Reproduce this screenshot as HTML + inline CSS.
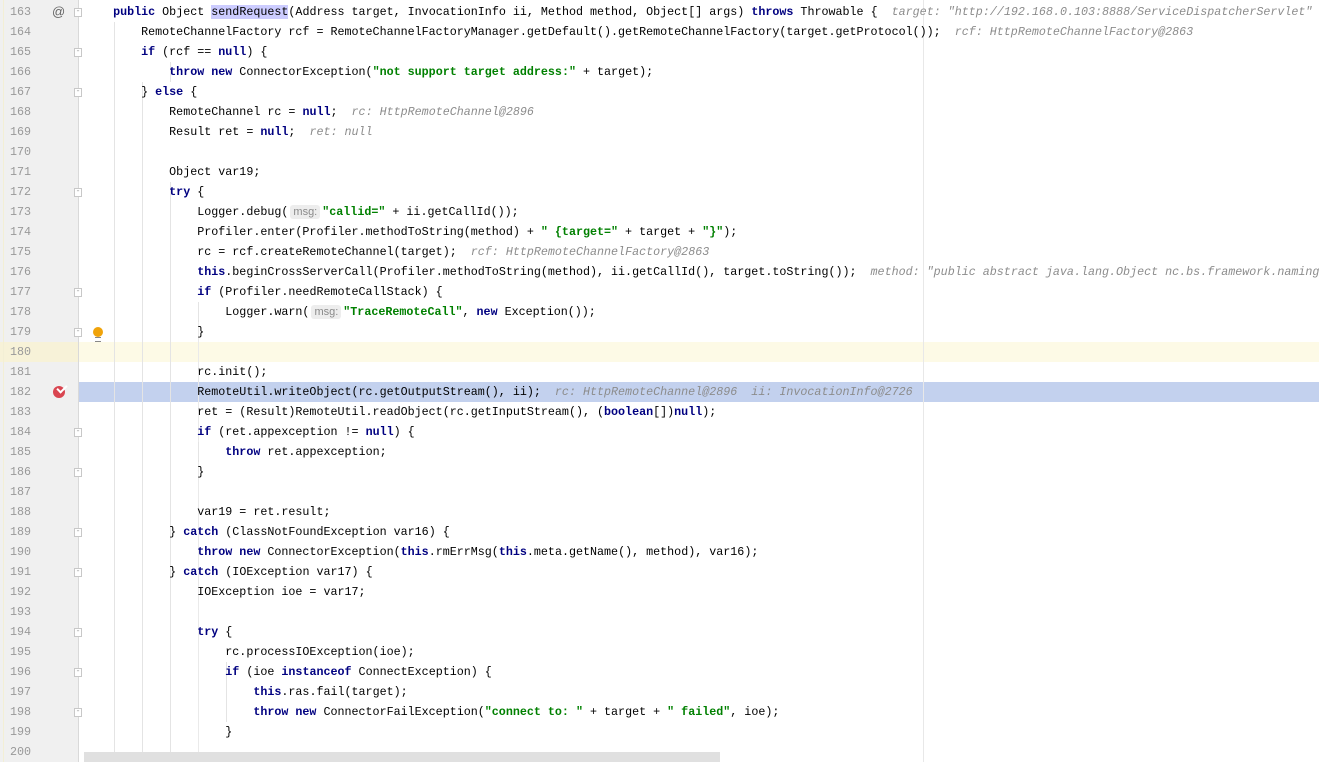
<!DOCTYPE html>
<html><head><meta charset="utf-8"><style>
body{margin:0;width:1319px;height:762px;overflow:hidden;background:#fff;position:relative;font-family:"Liberation Mono",monospace;}
.g{position:absolute;left:0;top:0;width:78px;height:762px;background:#f0f0f0;border-right:1px solid #d9d9d9;}
.ystrip{position:absolute;left:3px;top:0;width:1px;height:762px;background:#f3efd5}
.r{position:absolute;left:0;width:1319px;height:20px;}
.n{position:absolute;left:0;width:31px;text-align:right;font-size:11.7px;line-height:20px;color:#999;}
.c{position:absolute;left:85px;white-space:pre;font-size:11.7px;line-height:20px;color:#000;}
.k{color:#000080;font-weight:bold}
.s{color:#008000;font-weight:bold}
.h{color:#8c8c8c;font-style:italic}
.p{font-family:"Liberation Sans",sans-serif;font-size:11px;color:#8a8a8a;background:#ededed;border-radius:3px;padding:1px 3px;margin:0 2px;}
.hl{background:#ccccff}
.ig{position:absolute;width:1px;background:#e4e4e4}
.fold{position:absolute;left:74px;width:8px;height:9px;border:1px solid #c8c8c8;background:#fff;box-sizing:border-box;font-size:8px;line-height:6px;text-align:center;color:#999}
</style></head><body>
<div class="r" style="top:342px;background:#fdfae6"></div>
<div class="r" style="top:382px;left:78px;background:#c3d1ee"></div>
<div class="g"></div>
<div class="r" style="top:342px;width:78px;background:#f7f2d8"></div>
<div class="ystrip"></div>
<div class="ig" style="left:114px;top:22px;height:740px"></div>
<div class="ig" style="left:142px;top:82px;height:680px"></div>
<div class="ig" style="left:170px;top:182px;height:580px"></div>
<div class="ig" style="left:198px;top:322px;height:440px;background:#eaeaea"></div>
<div class="ig" style="left:170px;top:62px;height:20px"></div>
<div class="ig" style="left:198px;top:302px;height:20px"></div>
<div class="ig" style="left:198px;top:442px;height:20px"></div>
<div class="ig" style="left:226px;top:662px;height:60px"></div>
<div class="ig" style="left:923px;top:0;height:762px;background:#e8e8e8"></div>
<div style="position:absolute;left:84px;top:752px;width:636px;height:10px;background:#e0e0e0"></div>

<div class="fold" style="top:8px">-</div>
<div class="fold" style="top:48px">-</div>
<div class="fold" style="top:88px">-</div>
<div class="fold" style="top:188px">-</div>
<div class="fold" style="top:288px">-</div>
<div class="fold" style="top:328px">-</div>
<div class="fold" style="top:428px">-</div>
<div class="fold" style="top:468px">-</div>
<div class="fold" style="top:528px">-</div>
<div class="fold" style="top:568px">-</div>
<div class="fold" style="top:628px">-</div>
<div class="fold" style="top:668px">-</div>
<div class="fold" style="top:708px">-</div>
<div style="position:absolute;left:52px;top:4px;font-family:'Liberation Sans',sans-serif;font-size:13px;color:#666">@</div>
<div style="position:absolute;left:93px;top:327px;width:10px;height:10px;border-radius:50%;background:#f0a30a"></div>
<div style="position:absolute;left:95px;top:337px;width:6px;height:3px;border-top:1px solid #888;border-bottom:1px solid #888"></div>
<div style="position:absolute;left:53px;top:386px;width:12px;height:12px;border-radius:50%;background:#d94550"></div>
<div style="position:absolute;left:57px;top:385px;width:8px;height:4px;border-left:2px solid #fff;border-bottom:2px solid #fff;transform:rotate(-45deg)"></div>

<div class="r" style="top:2px"><div class="n">163</div><div class="c">    <span class="k">public</span> Object <span class="hl">sendRequest</span>(Address target, InvocationInfo ii, Method method, Object[] args) <span class="k">throws</span> Throwable {  <span class="h">target: "http://192.168.0.103:8888/ServiceDispatcherServlet"</span></div></div>
<div class="r" style="top:22px"><div class="n">164</div><div class="c">        RemoteChannelFactory rcf = RemoteChannelFactoryManager.getDefault().getRemoteChannelFactory(target.getProtocol());  <span class="h">rcf: HttpRemoteChannelFactory@2863</span></div></div>
<div class="r" style="top:42px"><div class="n">165</div><div class="c">        <span class="k">if</span> (rcf == <span class="k">null</span>) {</div></div>
<div class="r" style="top:62px"><div class="n">166</div><div class="c">            <span class="k">throw new</span> ConnectorException(<span class="s">"not support target address:"</span> + target);</div></div>
<div class="r" style="top:82px"><div class="n">167</div><div class="c">        } <span class="k">else</span> {</div></div>
<div class="r" style="top:102px"><div class="n">168</div><div class="c">            RemoteChannel rc = <span class="k">null</span>;  <span class="h">rc: HttpRemoteChannel@2896</span></div></div>
<div class="r" style="top:122px"><div class="n">169</div><div class="c">            Result ret = <span class="k">null</span>;  <span class="h">ret: null</span></div></div>
<div class="r" style="top:142px"><div class="n">170</div></div>
<div class="r" style="top:162px"><div class="n">171</div><div class="c">            Object var19;</div></div>
<div class="r" style="top:182px"><div class="n">172</div><div class="c">            <span class="k">try</span> {</div></div>
<div class="r" style="top:202px"><div class="n">173</div><div class="c">                Logger.debug(<span class="p">msg:</span><span class="s">"callid="</span> + ii.getCallId());</div></div>
<div class="r" style="top:222px"><div class="n">174</div><div class="c">                Profiler.enter(Profiler.methodToString(method) + <span class="s">" {target="</span> + target + <span class="s">"}"</span>);</div></div>
<div class="r" style="top:242px"><div class="n">175</div><div class="c">                rc = rcf.createRemoteChannel(target);  <span class="h">rcf: HttpRemoteChannelFactory@2863</span></div></div>
<div class="r" style="top:262px"><div class="n">176</div><div class="c">                <span class="k">this</span>.beginCrossServerCall(Profiler.methodToString(method), ii.getCallId(), target.toString());  <span class="h">method: "public abstract java.lang.Object nc.bs.framework.naming.</span></div></div>
<div class="r" style="top:282px"><div class="n">177</div><div class="c">                <span class="k">if</span> (Profiler.needRemoteCallStack) {</div></div>
<div class="r" style="top:302px"><div class="n">178</div><div class="c">                    Logger.warn(<span class="p">msg:</span><span class="s">"TraceRemoteCall"</span>, <span class="k">new</span> Exception());</div></div>
<div class="r" style="top:322px"><div class="n">179</div><div class="c">                }</div></div>
<div class="r" style="top:342px"><div class="n">180</div></div>
<div class="r" style="top:362px"><div class="n">181</div><div class="c">                rc.init();</div></div>
<div class="r" style="top:382px"><div class="n">182</div><div class="c">                RemoteUtil.writeObject(rc.getOutputStream(), ii);  <span class="h">rc: HttpRemoteChannel@2896  ii: InvocationInfo@2726</span></div></div>
<div class="r" style="top:402px"><div class="n">183</div><div class="c">                ret = (Result)RemoteUtil.readObject(rc.getInputStream(), (<span class="k">boolean</span>[])<span class="k">null</span>);</div></div>
<div class="r" style="top:422px"><div class="n">184</div><div class="c">                <span class="k">if</span> (ret.appexception != <span class="k">null</span>) {</div></div>
<div class="r" style="top:442px"><div class="n">185</div><div class="c">                    <span class="k">throw</span> ret.appexception;</div></div>
<div class="r" style="top:462px"><div class="n">186</div><div class="c">                }</div></div>
<div class="r" style="top:482px"><div class="n">187</div></div>
<div class="r" style="top:502px"><div class="n">188</div><div class="c">                var19 = ret.result;</div></div>
<div class="r" style="top:522px"><div class="n">189</div><div class="c">            } <span class="k">catch</span> (ClassNotFoundException var16) {</div></div>
<div class="r" style="top:542px"><div class="n">190</div><div class="c">                <span class="k">throw new</span> ConnectorException(<span class="k">this</span>.rmErrMsg(<span class="k">this</span>.meta.getName(), method), var16);</div></div>
<div class="r" style="top:562px"><div class="n">191</div><div class="c">            } <span class="k">catch</span> (IOException var17) {</div></div>
<div class="r" style="top:582px"><div class="n">192</div><div class="c">                IOException ioe = var17;</div></div>
<div class="r" style="top:602px"><div class="n">193</div></div>
<div class="r" style="top:622px"><div class="n">194</div><div class="c">                <span class="k">try</span> {</div></div>
<div class="r" style="top:642px"><div class="n">195</div><div class="c">                    rc.processIOException(ioe);</div></div>
<div class="r" style="top:662px"><div class="n">196</div><div class="c">                    <span class="k">if</span> (ioe <span class="k">instanceof</span> ConnectException) {</div></div>
<div class="r" style="top:682px"><div class="n">197</div><div class="c">                        <span class="k">this</span>.ras.fail(target);</div></div>
<div class="r" style="top:702px"><div class="n">198</div><div class="c">                        <span class="k">throw new</span> ConnectorFailException(<span class="s">"connect to: "</span> + target + <span class="s">" failed"</span>, ioe);</div></div>
<div class="r" style="top:722px"><div class="n">199</div><div class="c">                    }</div></div>
<div class="r" style="top:742px"><div class="n">200</div></div>
</body></html>
